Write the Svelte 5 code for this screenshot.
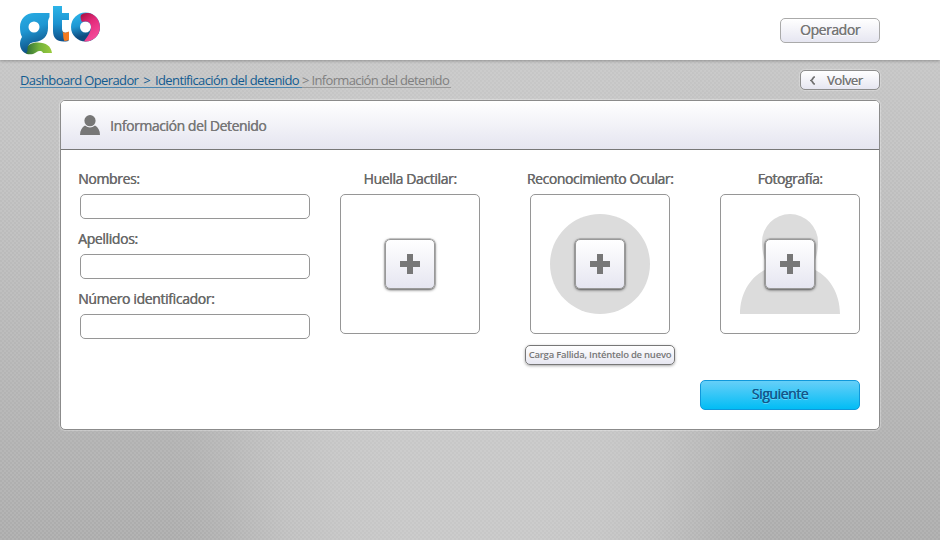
<script>
  const fields = ['Nombres:', 'Apellidos:', 'Número identificador:'];
  const captures = [
    { title: 'Huella Dactilar:', kind: 'finger', track: '-0.38px' },
    { title: 'Reconocimiento Ocular:', kind: 'eye', track: '-0.42px' },
    { title: 'Fotografía:', kind: 'photo', track: '-0.45px' }
  ];
</script>

<div class="page">
  <header>
    <svg class="logo" width="84" height="54" viewBox="18 4 84 54" role="img" aria-label="gto">
      <defs>
        <linearGradient id="blue" x1="0" y1="0" x2="0.25" y2="1">
          <stop offset="0" stop-color="#28ade4" /><stop offset=".45" stop-color="#1f97d3" /><stop offset="1" stop-color="#0e4c80" />
        </linearGradient>
        <linearGradient id="tall" x1="0" y1="0" x2="0" y2="1">
          <stop offset="0" stop-color="#2cb4e8" /><stop offset=".5" stop-color="#1c92d0" /><stop offset="1" stop-color="#0e4f88" />
        </linearGradient>
        <linearGradient id="green" x1="0" y1="0" x2="1" y2="0">
          <stop offset="0" stop-color="#2c6b35" /><stop offset=".5" stop-color="#72b13b" /><stop offset="1" stop-color="#9bcb3d" />
        </linearGradient>
        <linearGradient id="pink" x1="0" y1="0" x2=".5" y2="1">
          <stop offset="0" stop-color="#a40e3c" /><stop offset=".45" stop-color="#e32a7a" /><stop offset="1" stop-color="#f44b9b" />
        </linearGradient>
      </defs>
      <path fill="url(#blue)" fill-rule="evenodd" d="M34 13H49.500V17Q48.500 19 48 21V28C48 36 43 41 35 42C31 42.500 29 43.500 28.500 46L30 54C24 54.500 20 49.500 20 44C20 41.500 20.500 39.500 22 37C20.500 34 20 31 20 27C20 19 26 13 34 13ZM34 21.500A5.500 5.500 0 1 0 34 32.500A5.500 5.500 0 1 0 34 21.500Z" />
      <path fill="url(#green)" d="M27.500 48C27.500 45 31 42.500 38 42.500C46 42.500 51 46 52 53H43C42 50.500 39 50.500 36 52.500C33 54.500 29 55 26 53.500Q28 51 27.500 48Z" />
      <path fill="url(#tall)" d="M53 6H62V13H69V20H62V29C62 32 65 34 68.500 32V41C58 43 53 39 53 31Z" />
      <path fill="#f47a20" d="M62 30.500C63.500 33.500 66 33 69 31.500V40Q67 41 64.500 41C62.500 38 64 34 62 30.500Z" />
      <circle cx="85.500" cy="27" r="10" fill="none" stroke="url(#blue)" stroke-width="9" />
      <path fill="url(#pink)" d="M81 15C83 13 86 12.500 90 13.300A14.500 14.500 0 0 1 84 41.500C87 37 90 34 91 28C91.500 23 88 20.500 82 22C81 20 80 17 81 15Z" />
    </svg>
    <button class="btn user">Operador</button>
  </header>

  <div class="subbar">
    <nav>
      <a href="#dashboard" class="one">Dashboard Operador<i>&gt;</i></a><a href="#identificacion" class="two">Identificación del detenido</a><span>&gt; Información del detenido</span>
    </nav>
    <button class="btn back">
      <svg width="6" height="9" viewBox="0 0 6 9"><path d="M4.800 .7C2.500 1.500 2.800 3.800 1.300 4.500C2.800 5.200 2.500 7.500 4.800 8.300" fill="none" stroke="#707070" stroke-width="1.800" /></svg>
      <span>Volver</span>
    </button>
  </div>

  <main>
    <div class="head">
      <svg width="20" height="20" viewBox="0 0 20 20" fill="#777"><circle cx="10" cy="5.700" r="5.600" /><path d="M0 20C0 15.500 2 12.300 5 10.500Q10 14.500 15 10.500C18 12.300 20 15.500 20 20Z" /></svg>
      <h1>Información del Detenido</h1>
    </div>
    <div class="body">
      <form>
        {#each fields as field}
          <label><span>{field}</span><input type="text" /></label>
        {/each}
      </form>
      {#each captures as item}
        <section>
          <h2 style:letter-spacing={item.track}>{item.title}</h2>
          <div class="frame">
            {#if item.kind !== 'finger'}
              <svg class="shape" width="100" height="100" viewBox="0 0 100 100" fill="#dcdcdc">
                {#if item.kind === 'eye'}
                  <circle cx="50" cy="50" r="50" />
                {:else}
                  <path d="M50 0A28 28 0 0 1 78 28C78 37 76 47 71 54C89 61 100 79 100 100H0C0 79 11 61 29 54C24 47 22 37 22 28A28 28 0 0 1 50 0Z" />
                {/if}
              </svg>
            {/if}
            <button class="add" aria-label="Agregar">
              <svg width="20" height="20" viewBox="0 0 20 20"><path d="M7 0H13V7H20V13H13V20H7V13H0V7H7Z" fill="#777" /></svg>
            </button>
          </div>
          {#if item.kind === 'eye'}
            <button class="retry">Carga Fallida, Inténtelo de nuevo</button>
          {/if}
        </section>
      {/each}
    </div>
    <button class="next">Siguiente</button>
  </main>
</div>

<style>
  :global(body) { margin: 0; }
  .page {
    box-sizing: border-box;
    width: 940px;
    height: 540px;
    overflow: hidden;
    font-family: 'Open Sans', 'Noto Sans', sans-serif;
    color: #777;
    background:
      conic-gradient(rgba(255,255,255,.06) 25%, rgba(0,0,0,.012) 0 50%, rgba(255,255,255,.06) 0 75%, rgba(0,0,0,.012) 0) 0 0 / 4px 4px,
      radial-gradient(ellipse 300px 700px at 470px 430px, rgba(201,201,201,1) 25%, rgba(201,201,201,.92) 45%, rgba(201,201,201,.7) 63%, rgba(201,201,201,.3) 80%, rgba(201,201,201,.07) 92%, rgba(201,201,201,0) 100%),
      linear-gradient(#c7c7c7 60px, #aeaeae 540px);
  }
  header, .subbar { display: flex; justify-content: space-between; }
  header {
    box-sizing: border-box;
    height: 60px;
    padding: 4px 60px 0 18px;
    background: #fff;
    box-shadow: 0 1px 3px rgba(0,0,0,.28);
  }
  button { box-sizing: border-box; font-family: inherit; padding: 0; color: #777; }
  .btn {
    border: 1px solid #aaa;
    border-radius: 5px;
    background: linear-gradient(#fff, #e6e6f1);
    text-shadow: .25px 0 currentColor, 0 1px #fff;
  }
  .user { width: 100px; height: 25px; margin-top: 14px; padding-bottom: 2px; font-size: 14px; line-height: 20px; letter-spacing: -.42px; }
  .subbar { padding: 9px 60px 0 20px; height: 31px; }
  nav { display: flex; height: 18px; margin-top: 2px; font-size: 13px; line-height: 18px; letter-spacing: -.62px; white-space: nowrap; }
  nav a, nav span { height: 16px; border-bottom: 1px solid #4b86b0; color: #125b90; text-decoration: none; }
  nav i { font-style: normal; margin-left: 5px; }
  nav span { color: #808080; border-color: #999; width: 149px; letter-spacing: -.65px; }
  .one { width: 135px; }
  .two { width: 147px; }
  .back { display: flex; align-items: center; width: 80px; height: 20px; margin-top: 1px; padding-left: 9px; border-color: #8d8d8d; font-size: 13px; line-height: 16px; letter-spacing: -.4px; box-shadow: 0 0 1px 1px rgba(255,255,255,.25); }
  .back span { margin-left: 11px; }
  main {
    box-sizing: border-box;
    width: 820px;
    height: 330px;
    margin-left: 60px;
    border: 1px solid #8b8b8b;
    border-radius: 5px;
    background: #fff;
    box-shadow: 0 0 1px 1px rgba(255,255,255,.3);
    overflow: hidden;
  }
  .head { display: flex; height: 48px; padding-left: 19px; background: linear-gradient(#fff, #e5e5f0); border-bottom: 1px solid #777; }
  .head svg { margin-top: 14px; }
  h1, h2 { margin: 0; font-size: 14px; font-weight: 400; }
  h1 { margin: 14px 0 0 10px; line-height: 21px; letter-spacing: -.43px; text-shadow: .3px 0 currentColor; }
  .body { display: flex; height: 230px; padding: 18px 19px 0; box-sizing: border-box; }
  form { width: 230px; margin-right: 30px; }
  label { display: block; height: 60px; }
  label span { display: block; margin-left: -2px; height: 26px; font-size: 14px; line-height: 21px; letter-spacing: -.36px; color: #686868; text-shadow: .4px 0 currentColor; }
  input { display: block; box-sizing: border-box; width: 230px; height: 25px; padding: 2px 6px; border: 1px solid #969696; border-radius: 5px; background: #fff; }
  section { display: flex; flex-direction: column; align-items: center; width: 140px; margin-right: 50px; flex: none; }
  section:last-child { margin-right: 0; }
  h2 { height: 26px; line-height: 21px; color: #686868; white-space: nowrap; text-shadow: .4px 0 currentColor; }
  .frame { box-sizing: border-box; display: grid; place-items: center; width: 140px; height: 140px; border: 1px solid #969696; border-radius: 5px; flex: none; }
  .shape, .add { grid-area: 1 / 1; }
  .add { z-index: 1; display: grid; place-items: center; width: 50px; height: 50px; border: 1px solid #999; border-radius: 5px; background: linear-gradient(#fff, #e6e6f1); box-shadow: 0 0 0 .5px rgba(110,110,110,.6), 0 1px 3px rgba(0,0,0,.65); }
  .retry { width: 150px; height: 20px; margin-top: 11px; flex: none; border: 1px solid #777; border-radius: 5px; background: linear-gradient(#fff, #e7e7f1); box-shadow: 0 1px 3px rgba(0,0,0,.35); font-size: 9.500px; font-weight: 600; line-height: 16px; letter-spacing: -.24px; white-space: nowrap; }
  .next { display: block; width: 160px; height: 30px; margin: 0 19px 0 auto; padding-bottom: 2px; border: 1px solid #0f98db; border-radius: 5px; background: linear-gradient(#66cff8, #02bdf5); color: #12578b; font-size: 14px; line-height: 26px; letter-spacing: -.42px; text-shadow: .3px 0 currentColor, 0 1px rgba(255,255,255,.3); }
</style>
